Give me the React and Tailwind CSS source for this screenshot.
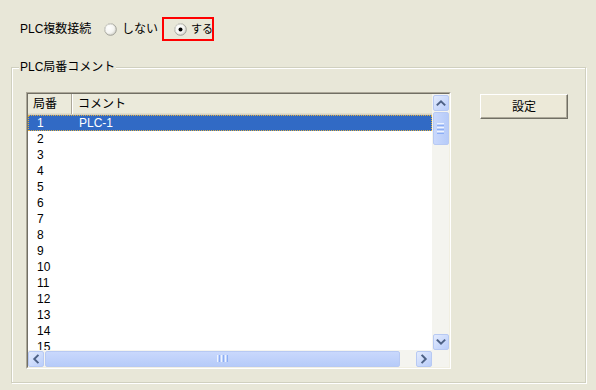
import React from "react";

const Chevron = ({ dir }) => {
  const paths = {
    up: "M4 10 L8 6 L12 10",
    down: "M4 6 L8 10 L12 6",
    left: "M10 4 L6 8 L10 12",
    right: "M6 4 L10 8 L6 12",
  };
  return (
    <svg width="16" height="16" viewBox="0 0 16 16">
      <path d={paths[dir]} fill="none" stroke="#4d6185" strokeWidth="2.2" strokeLinecap="square" />
    </svg>
  );
};

const SBtn = ({ dir }) => (
  <div className="shrink-0 w-[16px] h-[16px] rounded-[2px] border border-[#b7c9f3] bg-gradient-to-br from-[#e3ebfd] to-[#b9cdfa] flex items-center justify-center">
    <Chevron dir={dir} />
  </div>
);

const Radio = ({ checked }) => (
  <svg width="13" height="13" viewBox="0 0 13 13" className="shrink-0 block">
    <defs>
      <radialGradient id={checked ? "rg1" : "rg0"} cx="0.35" cy="0.35" r="0.75">
        <stop offset="0" stopColor="#ffffff" />
        <stop offset="0.6" stopColor="#f4f4f0" />
        <stop offset="1" stopColor="#c8c8c0" />
      </radialGradient>
    </defs>
    <circle cx="6.5" cy="6.5" r="5.8" fill={`url(#${checked ? "rg1" : "rg0"})`} stroke="#a0a098" strokeWidth="1" />
    <path d="M2.3 9.8 A5 5 0 0 1 9.8 2.3" fill="none" stroke="#d8d8d0" strokeWidth="1" />
    {checked && <circle cx="6.5" cy="6.5" r="2" fill="#000" />}
  </svg>
);

export default function App() {
  const rows = Array.from({ length: 15 }, (_, i) => i + 1);
  return (
    <div className="w-[596px] h-[390px] bg-[#e8e7d8] overflow-hidden text-[12px] leading-[14px] text-black font-['Liberation_Sans','Noto_Sans_CJK_JP',sans-serif] pt-[17px]">
      {/* top row */}
      <div className="flex items-center h-[24px] pl-[20px] whitespace-nowrap">
        <span className="w-[84px] shrink-0">PLC複数接続</span>
        <Radio />
        <span className="ml-[5px] w-[40px] shrink-0">しない</span>
        <div className="shrink-0 w-[52px] h-[24px] border-2 border-[#ff0000] flex items-center pl-[10px]">
          <Radio checked />
          <span className="ml-[4px] text-[11px]">する</span>
        </div>
      </div>

      {/* group box */}
      <div className="relative ml-[11px] mt-[26px] w-[575px] h-[316px] border border-[#d0d0bf] shadow-[inset_1px_1px_0_#ffffff,1px_1px_0_#ffffff] pl-[14px] pt-[24px] flex items-start">
        <div className="absolute left-[7px] top-[-8px] bg-[#e8e7d8] px-[1px]">PLC局番コメント</div>

        {/* list box */}
        <div className="shrink-0 w-[425px] h-[277px] border border-t-[#aca899] border-l-[#aca899] border-r-[#ffffff] border-b-[#ffffff]">
          <div className="w-[423px] h-[275px] border border-t-[#716f64] border-l-[#716f64] border-r-[#f1efe2] border-b-[#f1efe2] bg-white flex flex-col">
            <div className="flex h-[256px]">
              {/* content */}
              <div className="w-[404px] h-[256px] overflow-hidden">
                <div className="flex h-[21px] bg-[#ebeadb] border-b border-[#d6d2c2] shadow-[inset_0_-1px_0_#e2decd]">
                  <div className="w-[44px] pl-[5px] flex items-center border-r border-[#aca899]">局番</div>
                  <div className="flex-1 pl-[5px] flex items-center border-l border-white">コメント</div>
                </div>
                {rows.map((n) => (
                  <div
                    key={n}
                    className={
                      n === 1
                        ? "flex h-[16px] items-center bg-[#316ac5] text-white outline-1 outline-dotted outline-[#e0b040] -outline-offset-1"
                        : "flex h-[16px] items-center"
                    }
                  >
                    <div className="w-[44px] pl-[9px]">{n}</div>
                    <div className="pl-[7px]">{n === 1 ? "PLC-1" : ""}</div>
                  </div>
                ))}
              </div>
              {/* vscroll */}
              <div className="w-[17px] h-[256px] bg-[#f4f4ef] flex flex-col items-center pt-[1px]">
                <SBtn dir="up" />
                <div className="mt-[1px] w-[16px] h-[33px] rounded-[2px] border border-[#b7c9f3] bg-gradient-to-r from-[#c9d8fc] to-[#b6cbf9] flex flex-col items-center justify-center gap-[1px]">
                  <div className="w-[7px] h-[1px] bg-[#eef4fe]" />
                  <div className="w-[7px] h-[1px] bg-[#8caef5]" />
                  <div className="w-[7px] h-[1px] bg-[#eef4fe]" />
                  <div className="w-[7px] h-[1px] bg-[#8caef5]" />
                  <div className="w-[7px] h-[1px] bg-[#eef4fe]" />
                  <div className="w-[7px] h-[1px] bg-[#8caef5]" />
                </div>
                <div className="flex-1" />
                <SBtn dir="down" />
              </div>
            </div>
            {/* hscroll */}
            <div className="flex h-[17px]">
              <div className="w-[404px] h-[17px] bg-[#f4f4ef] flex items-center">
                <SBtn dir="left" />
                <div className="ml-[1px] w-[355px] h-[16px] rounded-[2px] border border-[#b7c9f3] bg-gradient-to-b from-[#c9d8fc] to-[#b6cbf9] flex items-center justify-center gap-[1px]">
                  <div className="w-[1px] h-[7px] bg-[#eef4fe]" />
                  <div className="w-[1px] h-[7px] bg-[#8caef5]" />
                  <div className="w-[1px] h-[7px] bg-[#eef4fe]" />
                  <div className="w-[1px] h-[7px] bg-[#8caef5]" />
                  <div className="w-[1px] h-[7px] bg-[#eef4fe]" />
                  <div className="w-[1px] h-[7px] bg-[#8caef5]" />
                </div>
                <div className="flex-1" />
                <SBtn dir="right" />
              </div>
              <div className="w-[17px] h-[17px] bg-[#f4f4ef]" />
            </div>
          </div>
        </div>

        {/* button */}
        <div className="shrink-0 ml-[29px] mt-[2px] w-[88px] h-[25px] border border-t-white border-l-white border-r-[#716f64] border-b-[#716f64] shadow-[inset_-1px_-1px_0_#aca899] bg-[#ece9d8] flex items-center justify-center">
          設定
        </div>
      </div>
    </div>
  );
}
